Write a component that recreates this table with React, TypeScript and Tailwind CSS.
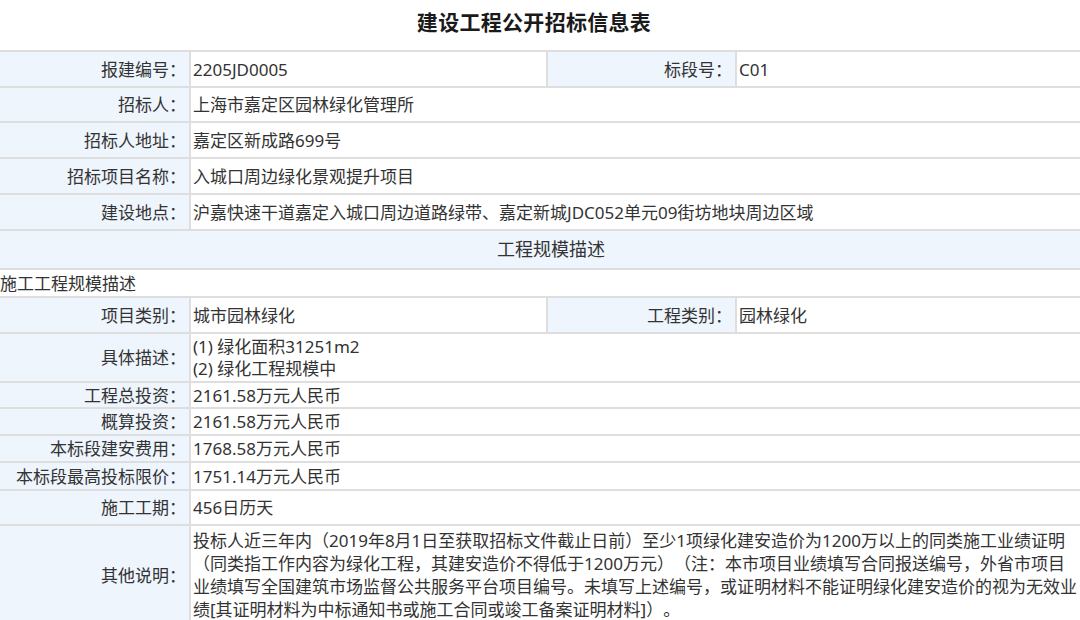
import React from "react";

const FONT = { fontFamily: '"Noto Sans", "Noto Sans CJK SC", sans-serif' };

type Pair = { label: string; value: React.ReactNode };

function Label({ children, w }: { children: React.ReactNode; w: string }) {
  return (
    <div className={`${w} shrink-0 h-full bg-[#eef5fd] border-r-2 border-[#dedede] flex items-center justify-end pr-[3px] whitespace-nowrap`}>
      {children}
    </div>
  );
}

function Value({ children, w }: { children: React.ReactNode; w: string }) {
  return (
    <div className={`${w} h-full border-r-2 border-[#dedede] flex items-center pl-[2px] whitespace-nowrap overflow-hidden`}>
      {children}
    </div>
  );
}

function FullRow({ h, label, value }: { h: string; label: string; value: React.ReactNode }) {
  return (
    <div className={`${h} flex border-b-2 border-[#dedede]`}>
      <Label w="w-[191px]">{label}</Label>
      <div className="flex-1 h-full flex items-center pl-[2px] whitespace-nowrap overflow-hidden">{value}</div>
    </div>
  );
}

function DoubleRow({ h, a, b }: { h: string; a: Pair; b: Pair }) {
  return (
    <div className={`${h} flex border-b-2 border-[#dedede]`}>
      <Label w="w-[191px]">{a.label}</Label>
      <Value w="w-[357px]">{a.value}</Value>
      <Label w="w-[189px]">{b.label}</Label>
      <div className="flex-1 h-full flex items-center pl-[2px] whitespace-nowrap">{b.value}</div>
    </div>
  );
}

export default function App() {
  return (
    <div className="w-[1080px] h-[620px] overflow-hidden bg-white text-[#333333] text-[17px] leading-[23px] [text-spacing-trim:space-all]" style={FONT}>
      <div className="w-[1102px]">
        <div className="h-[50px] w-[1068px] flex items-center justify-center pb-[6px]">
          <h1 className="text-[21px] font-bold text-[#1a1a1a] tracking-[0.3px]">建设工程公开招标信息表</h1>
        </div>
        <div className="border-t-2 border-[#dedede]">
          <DoubleRow
            h="h-[36px]"
            a={{ label: "报建编号：", value: "2205JD0005" }}
            b={{ label: "标段号：", value: "C01" }}
          />
          <FullRow h="h-[35px]" label="招标人：" value="上海市嘉定区园林绿化管理所" />
          <FullRow h="h-[36px]" label="招标人地址：" value="嘉定区新成路699号" />
          <FullRow h="h-[36px]" label="招标项目名称：" value="入城口周边绿化景观提升项目" />
          <FullRow
            h="h-[36px]"
            label="建设地点："
            value="沪嘉快速干道嘉定入城口周边道路绿带、嘉定新城JDC052单元09街坊地块周边区域"
          />
          <div className="h-[39px] bg-[#eef5fd] border-b-2 border-[#dedede] flex items-center justify-center text-[18px]">
            工程规模描述
          </div>
          <div className="h-[28px] border-b-2 border-[#dedede] flex items-center whitespace-nowrap">
            施工工程规模描述
          </div>
          <DoubleRow
            h="h-[36px]"
            a={{ label: "项目类别：", value: "城市园林绿化" }}
            b={{ label: "工程类别：", value: "园林绿化" }}
          />
          <FullRow
            h="h-[49px]"
            label="具体描述："
            value={
              <div className="leading-[22px]">
                <div>(1) 绿化面积31251m2</div>
                <div>(2) 绿化工程规模中</div>
              </div>
            }
          />
          <FullRow h="h-[26px]" label="工程总投资：" value="2161.58万元人民币" />
          <FullRow h="h-[27px]" label="概算投资：" value="2161.58万元人民币" />
          <FullRow h="h-[27px]" label="本标段建安费用：" value="1768.58万元人民币" />
          <FullRow h="h-[28px]" label="本标段最高投标限价：" value="1751.14万元人民币" />
          <FullRow h="h-[35px]" label="施工工期：" value="456日历天" />
          <FullRow
            h="h-[100px]"
            label="其他说明："
            value={
              <div className="leading-[23px]">
                <div>投标人近三年内（2019年8月1日至获取招标文件截止日前）至少1项绿化建安造价为1200万以上的同类施工业绩证明</div>
                <div>（同类指工作内容为绿化工程，其建安造价不得低于1200万元）（注：本市项目业绩填写合同报送编号，外省市项目</div>
                <div>业绩填写全国建筑市场监督公共服务平台项目编号。未填写上述编号，或证明材料不能证明绿化建安造价的视为无效业</div>
                <div>绩[其证明材料为中标通知书或施工合同或竣工备案证明材料]）。</div>
              </div>
            }
          />
        </div>
      </div>
    </div>
  );
}
